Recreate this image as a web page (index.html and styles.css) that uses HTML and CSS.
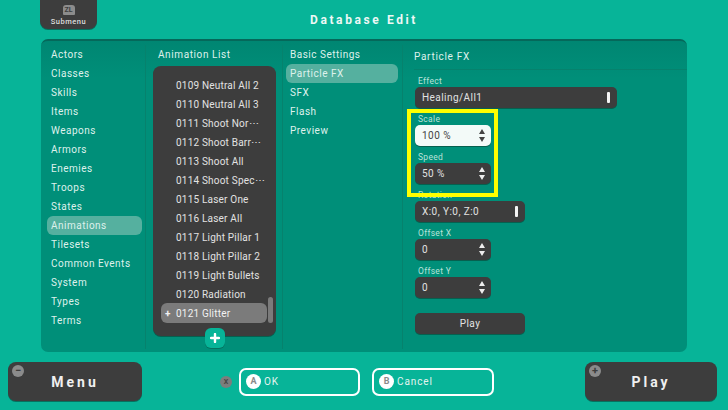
FILE: index.html
```html
<!DOCTYPE html>
<html lang="en">
<head>
<meta charset="utf-8">
<title>Database Edit</title>
<link rel="stylesheet" href="styles.css">
</head>
<body>
<div class="app">
  <header class="top">
    <div class="submenu"><span class="zl">ZL</span><span>Submenu</span></div>
    <h1 class="title">Database Edit</h1>
  </header>
  <main class="panel">
    <nav class="col nav">
      <div class="item">Actors</div><div class="item">Classes</div><div class="item">Skills</div><div class="item">Items</div><div class="item">Weapons</div><div class="item">Armors</div><div class="item">Enemies</div><div class="item">Troops</div><div class="item">States</div><div class="item sel">Animations</div><div class="item">Tilesets</div><div class="item">Common Events</div><div class="item">System</div><div class="item">Types</div><div class="item">Terms</div>
    </nav>
    <section class="col listcol">
      <div class="listhead">Animation List</div>
      <div class="listbox">
        <div class="row">0109 Neutral All 2</div><div class="row">0110 Neutral All 3</div><div class="row">0111 Shoot Nor⋯</div><div class="row">0112 Shoot Barr⋯</div><div class="row">0113 Shoot All</div><div class="row">0114 Shoot Spec⋯</div><div class="row">0115 Laser One</div><div class="row">0116 Laser All</div><div class="row">0117 Light Pillar 1</div><div class="row">0118 Light Pillar 2</div><div class="row">0119 Light Bullets</div><div class="row">0120 Radiation</div><div class="row cur"><span class="mark">+</span>0121 Glitter</div>
        <div class="scroll"></div>
        <div class="add"><svg width="10" height="10" viewBox="0 0 10 10"><path d="M5 1v8M1 5h8" stroke="#fff" stroke-width="2.4" stroke-linecap="round"/></svg></div>
      </div>
    </section>
    <nav class="col sub">
      <div class="item">Basic Settings</div><div class="item sel">Particle FX</div><div class="item">SFX</div><div class="item">Flash</div><div class="item">Preview</div>
    </nav>
    <section class="form">
      <h2 class="formhead">Particle FX</h2>
      <label class="lab">Effect</label>
      <div class="field wide"><span>Healing/All1</span><i class="bar"></i></div>
      <label class="lab">Scale</label>
      <div class="field num light"><span>100 %</span><svg class="spin" width="6" height="13" viewBox="0 0 6 13"><path d="M3 0l3 5H0zM3 13l3-5H0z"/></svg></div>
      <label class="lab">Speed</label>
      <div class="field num"><span>50 %</span><svg class="spin" width="6" height="13" viewBox="0 0 6 13"><path d="M3 0l3 5H0zM3 13l3-5H0z"/></svg></div>
      <label class="lab">Rotation</label>
      <div class="field mid"><span>X:0, Y:0, Z:0</span><i class="bar"></i></div>
      <label class="lab">Offset X</label>
      <div class="field num"><span>0</span><svg class="spin" width="6" height="13" viewBox="0 0 6 13"><path d="M3 0l3 5H0zM3 13l3-5H0z"/></svg></div>
      <label class="lab">Offset Y</label>
      <div class="field num"><span>0</span><svg class="spin" width="6" height="13" viewBox="0 0 6 13"><path d="M3 0l3 5H0zM3 13l3-5H0z"/></svg></div>
      <div class="field mid play">Play</div>
      <div class="hilite"></div>
    </section>
  </main>
  <footer class="bottom">
    <div class="big"><span class="pin">−</span>Menu</div>
    <div class="actions">
      <span class="xkey">X</span>
      <div class="act"><span class="key">A</span>OK</div>
      <div class="act cancel"><span class="key">B</span>Cancel</div>
    </div>
    <div class="big bigr"><span class="pin">+</span>Play</div>
  </footer>
</div>
</body>
</html>
```
FILE: styles.css
```css
* { box-sizing: border-box; }
html, body { margin: 0; padding: 0; }
body { width: 728px; height: 410px; overflow: hidden; background: #07b498; font-family: Roboto, "Noto Sans", sans-serif; color: #e4f3ef; }
.app { width: 728px; height: 410px; display: flex; flex-direction: column; }

.top { height: 39px; padding-left: 40px; display: flex; position: relative; }
.submenu { width: 57px; height: 29px; background: #3d3d3d; border-radius: 0 0 8px 8px; box-shadow: 0 1px 0 #06715f; display: flex; flex-direction: column; align-items: center; justify-content: flex-end; padding-bottom: 3px; font-size: 7.5px; letter-spacing: .5px; font-weight: 500; color: #ddd; line-height: 9px; }
.zl { width: 12px; height: 10px; background: #8c8c8c; border-radius: 3px 3px 1px 1px; color: #3d3d3d; font-size: 7px; font-weight: 700; line-height: 10px; text-align: center; letter-spacing: 0; margin-bottom: 2px; }
.title { position: absolute; left: 0; right: 0; top: 11px; margin: 0; text-align: center; font-size: 12px; line-height: 18px; font-weight: 700; letter-spacing: 2.6px; color: #edf8f5; }

.panel { margin-left: 41px; width: 646px; height: 313px; background: linear-gradient(#008672, #008f79 12%, #008f79); border-radius: 7px; border-top: 2px solid #05685a; display: flex; position: relative; }
.col { border-right: 1px solid #06826d; margin: 4px 0 3px; }
.item { height: 19px; line-height: 19px; font-size: 10px; letter-spacing: .5px; padding-left: 4px; color: #dff1ec; border-radius: 6px; }
.item.sel { background: #55b09f; }
.nav { width: 105px; padding: 0 3px 0 6px; }
.listcol { width: 137px; padding: 0 7px; position: relative; }
.listhead { font-size: 10px; line-height: 19px; letter-spacing: .6px; padding-left: 5px; color: #dff1ec; }
.listbox { position: relative; width: 123px; height: 270px; margin-top: 2px; background: #3d3d3d; border-radius: 8px; box-shadow: 0 1px 0 #06604f; padding-top: 10px; }
.row { height: 19px; line-height: 19px; margin-left: 8px; width: 106px; padding-left: 15px; font-size: 10px; letter-spacing: .2px; color: #e2e2e2; white-space: nowrap; border-radius: 6px; position: relative; }
.row.cur { background: #7b7b7b; height: 20px; margin-top: -1px; line-height: 21px; color: #f2f2f2; }
.mark { position: absolute; left: 4px; top: 0; font-weight: 700; }
.scroll { position: absolute; right: 3px; top: 231px; width: 5px; height: 26px; background: #7b7b7b; border-radius: 3px; }
.add { position: absolute; left: 52px; bottom: -12px; width: 20px; height: 20px; background: #07b498; border-radius: 6px; box-shadow: 0 1px 0 #06715f; display: flex; align-items: center; justify-content: center; }

.sub { width: 120px; padding: 0 4px 0 3px; }
.form { flex: 1; padding: 7px 0 0 11px; position: relative; }
.formhead { margin: 0 0 6px; height: 22px; line-height: 18px; font-size: 10px; font-weight: 400; letter-spacing: .7px; color: #dff1ec; border-bottom: 1px solid #06826d; }
.lab { display: block; margin: 0 0 1px 4px; height: 10px; line-height: 10px; font-size: 8.5px; letter-spacing: .3px; color: #b9e2d9; }
.field { margin: 0 0 6px 1px; height: 21px; background: #3d3d3d; border-radius: 5px; box-shadow: 0 1px 0 #06604f; display: flex; align-items: center; justify-content: space-between; font-size: 10px; letter-spacing: .45px; color: #e2e2e2; padding: 0 7px; }
.wide { width: 202px; }
.mid { width: 110px; }
.num { width: 76px; padding-right: 6px; }
.light { background: #f3faf8; color: #444; }
.light .spin { fill: #444; }
.spin { fill: #eee; }
.bar { width: 3px; height: 11px; background: #f4f4f4; border-radius: 1px; }
.play { justify-content: center; margin-top: 15px; }
.hilite { position: absolute; left: 4px; top: 68px; width: 91px; height: 88px; border: 4px solid #ffff00; }

.bottom { flex: 1; padding: 10px 11px 9px 8px; display: flex; justify-content: space-between; align-items: stretch; }
.big { position: relative; width: 134px; background: #3d3d3d; border-radius: 8px; box-shadow: 0 1px 0 #06715f; display: flex; align-items: center; justify-content: center; font-size: 14px; font-weight: 700; letter-spacing: 3px; color: #f0f0f0; }
.bigr { width: 132px; }
.pin { position: absolute; left: 4px; top: 3px; width: 12px; height: 12px; border-radius: 50%; background: #8b8b8b; color: #3d3d3d; font-size: 11px; line-height: 12px; text-align: center; letter-spacing: 0; }
.actions { display: flex; align-items: center; gap: 12px; margin-right: 19px; }
.xkey { width: 12px; height: 12px; border-radius: 50%; background: #7d7d7d; color: #444; font-size: 7px; font-weight: 700; line-height: 12px; text-align: center; margin: 0 -5px 0 6px; }
.act { width: 121px; height: 28px; border: 2px solid #fff; border-radius: 7px; display: flex; align-items: center; gap: 3px; padding-left: 5px; font-size: 10px; letter-spacing: .9px; color: #e4f3ef; }
.cancel { width: 122px; }
.key { width: 15px; height: 15px; border-radius: 50%; background: #fff; color: #8a8a8a; font-size: 9px; font-weight: 700; line-height: 15px; text-align: center; letter-spacing: 0; }
```
